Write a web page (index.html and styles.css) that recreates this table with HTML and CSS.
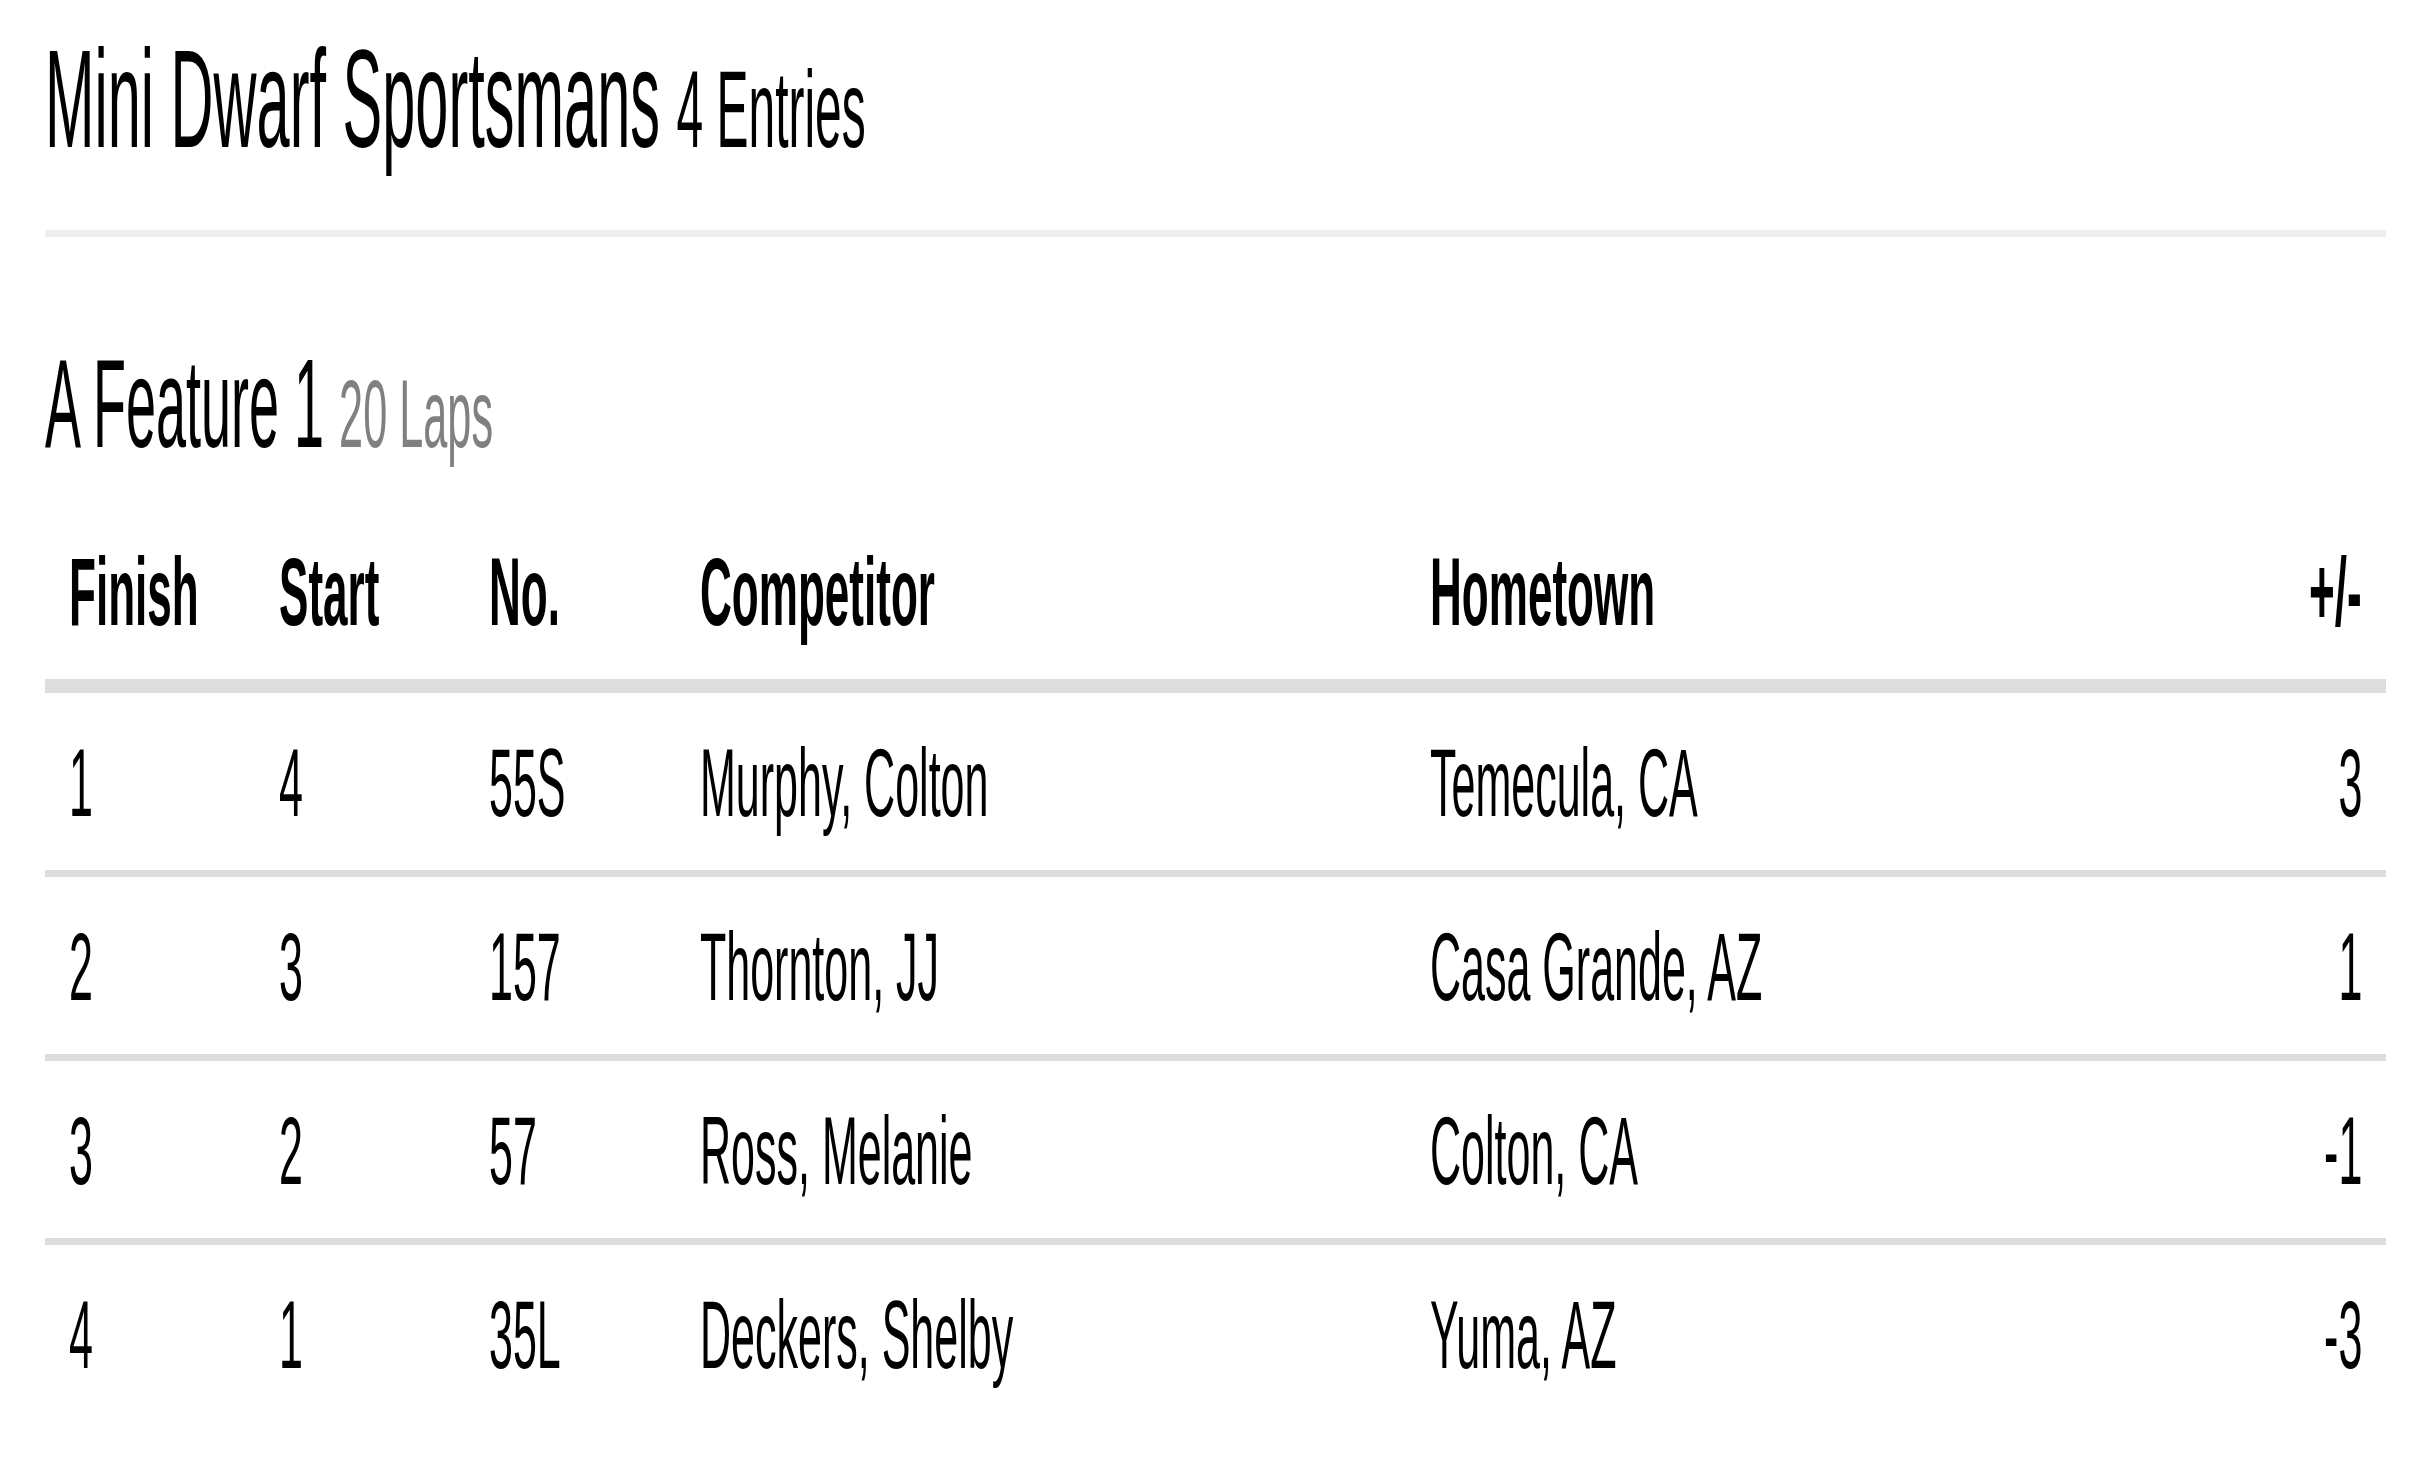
FILE: index.html
```html
<!DOCTYPE html>
<html lang="en">
<head>
<meta charset="utf-8">
<title>Mini Dwarf Sportsmans - A Feature 1</title>
<link rel="stylesheet" href="styles.css">
</head>
<body>
<div class="page">
  <header class="class-head">
    <h1 class="class-title"><span class="sx">Mini Dwarf Sportsmans <small class="entries">4 Entries</small></span></h1>
  </header>
  <section class="race">
    <h2 class="race-title"><span class="sx">A Feature 1 <small class="laps">20 Laps</small></span></h2>
    <table class="results">
      <colgroup>
        <col class="c-finish">
        <col class="c-start">
        <col class="c-no">
        <col class="c-comp">
        <col class="c-home">
        <col class="c-diff">
      </colgroup>
      <thead>
        <tr>
          <th><span class="sx">Finish</span></th>
          <th><span class="sx">Start</span></th>
          <th><span class="sx">No.</span></th>
          <th><span class="sx">Competitor</span></th>
          <th><span class="sx">Hometown</span></th>
          <th class="right"><span class="sx">+/-</span></th>
        </tr>
      </thead>
      <tbody>
        <tr>
          <td><span class="sx">1</span></td>
          <td><span class="sx">4</span></td>
          <td><span class="sx">55S</span></td>
          <td><span class="sx">Murphy, Colton</span></td>
          <td><span class="sx">Temecula, CA</span></td>
          <td class="right"><span class="sx">3</span></td>
        </tr>
        <tr>
          <td><span class="sx">2</span></td>
          <td><span class="sx">3</span></td>
          <td><span class="sx">157</span></td>
          <td><span class="sx">Thornton, JJ</span></td>
          <td><span class="sx">Casa Grande, AZ</span></td>
          <td class="right"><span class="sx">1</span></td>
        </tr>
        <tr>
          <td><span class="sx">3</span></td>
          <td><span class="sx">2</span></td>
          <td><span class="sx">57</span></td>
          <td><span class="sx">Ross, Melanie</span></td>
          <td><span class="sx">Colton, CA</span></td>
          <td class="right"><span class="sx">-1</span></td>
        </tr>
        <tr>
          <td><span class="sx">4</span></td>
          <td><span class="sx">1</span></td>
          <td><span class="sx">35L</span></td>
          <td><span class="sx">Deckers, Shelby</span></td>
          <td><span class="sx">Yuma, AZ</span></td>
          <td class="right"><span class="sx">-3</span></td>
        </tr>
      </tbody>
    </table>
  </section>
</div>
</body>
</html>
```

FILE: styles.css
```css
html, body {
  margin: 0;
  padding: 0;
  background: #ffffff;
}

body {
  color: #000000;
  font-family: "Liberation Sans", Arial, sans-serif;
}

.page {
  padding: 0 45px;
}

/* condensed text rendering */
.sx {
  display: inline-block;
  white-space: nowrap;
  transform: scaleX(0.425);
  transform-origin: 0 50%;
}

.right .sx {
  transform-origin: 100% 50%;
}

.class-title {
  margin: 0;
  padding: 22px 0 54px;
  font-size: 140px;
  line-height: 154px;
  font-weight: 400;
  border-bottom: 7px solid #eeeeee;
  white-space: nowrap;
}

.entries {
  display: inline-block;
  font-size: 109px;
  line-height: 1;
  transform: scaleX(1.035);
  transform-origin: 0 50%;
}

.race-title {
  margin: 96px 0 0;
  font-size: 127px;
  line-height: 140px;
  font-weight: 400;
  white-space: nowrap;
}

.laps {
  display: inline-block;
  font-size: 96px;
  line-height: 1;
  color: #808080;
  transform: scaleX(1.06);
  transform-origin: 0 50%;
}

.results {
  width: 100%;
  margin-top: 30px;
  border-collapse: separate;
  border-spacing: 0;
  table-layout: fixed;
  font-size: 96px;
}

.c-finish { width: 210px; }
.c-start { width: 210px; }
.c-no { width: 211px; }
.c-comp { width: 730px; }
.c-diff { width: 300px; }

.results th {
  font-weight: 700;
  text-align: left;
  padding: 34px 24px 32px;
  line-height: 110px;
  border-bottom: 14px solid #dddddd;
  white-space: nowrap;
}

.results th .sx {
  transform: scaleX(0.459);
}

.results td {
  padding: 35px 24px 33px;
  line-height: 109px;
  border-bottom: 7px solid #dddddd;
  white-space: nowrap;
}

.results td .sx {
  transform: scaleX(0.448);
}

.results tbody tr:last-child td {
  border-bottom: none;
}

.results .right {
  text-align: right;
}
```
